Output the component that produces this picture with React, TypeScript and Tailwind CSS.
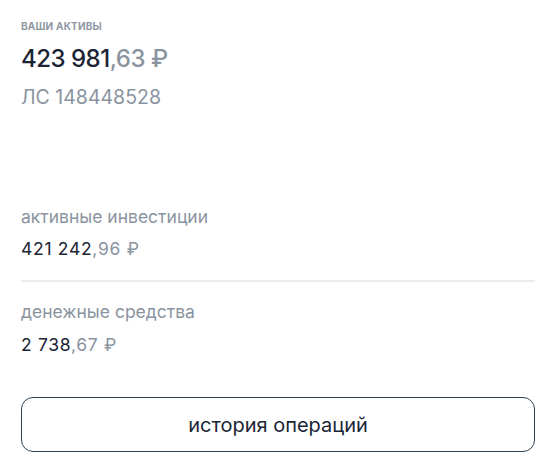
import React from "react";

function Amount({ int, dec, cls }: { int: string; dec: string; cls: string }) {
  return (
    <div className={cls}>
      <span className="text-[#1b2535]">{int}</span>
      <span className="text-[#8a949f]">,{dec} ₽</span>
    </div>
  );
}

export default function App() {
  return (
    <div
      className="w-[552px] h-[476px] bg-white flex flex-col px-[21px] pt-[19px] pr-[17px]"
      style={{ fontFamily: "Inter, 'Noto Sans', sans-serif" }}
    >
      <div className="text-[10px] leading-[14px] font-bold uppercase tracking-[0.2px] text-[#8e97a3]">
        Ваши активы
      </div>
      <Amount
        int="423 981"
        dec="63"
        cls="mt-[10px] text-[24px] leading-[32px] font-medium tracking-[-0.5px]"
      />
      <div className="mt-[8px] text-[19.5px] leading-[28px] text-[#8a949f]">ЛС 148448528</div>

      <div className="mt-[94px] text-[17.5px] leading-[24px] text-[#8a949f]">активные инвестиции</div>
      <Amount int="421 242" dec="96" cls="mt-[8px] text-[17.5px] leading-[24px] tracking-[0.7px]" />

      <div className="mt-[19px] h-[2px] bg-[#eaecf0]" />

      <div className="mt-[18px] text-[17.5px] leading-[24px] text-[#8a949f]">денежные средства</div>
      <Amount int="2 738" dec="67" cls="mt-[9px] text-[17.5px] leading-[24px] tracking-[0.7px]" />

      <button className="mt-[40px] h-[55px] w-full rounded-[12px] border border-[#2f4257] bg-white text-[20px] text-[#1b2535] flex items-center justify-center">
        история операций
      </button>
    </div>
  );
}
